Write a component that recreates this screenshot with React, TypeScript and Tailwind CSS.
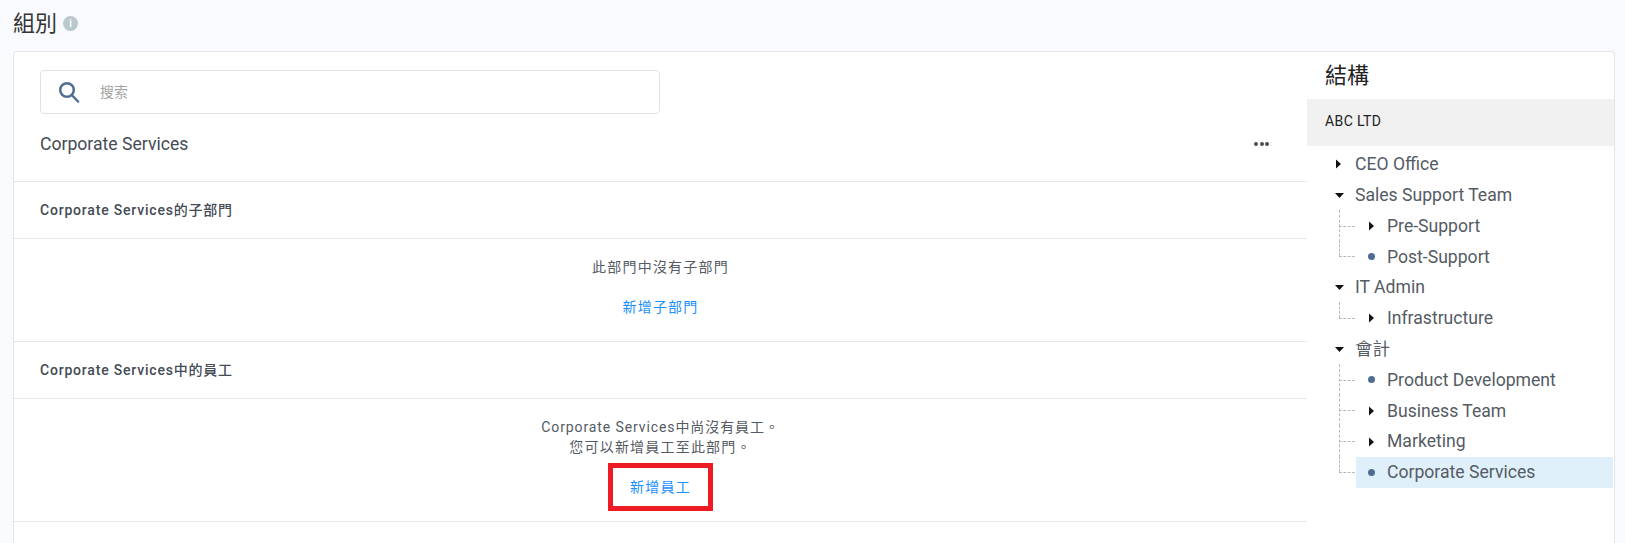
type Kind = "right" | "down" | "dot";

function Marker({ kind }: { kind: Kind }) {
  if (kind === "dot") return <span className="block h-[7px] w-[7px] rounded-full bg-[#4f6d94]" />;
  if (kind === "right")
    return (
      <svg width="5" height="10" viewBox="0 0 5 10" className="ml-[1px] block">
        <path d="M0 0.5 L5 5 L0 9.5 Z" fill="#111" />
      </svg>
    );
  return (
    <svg width="9" height="5" viewBox="0 0 9 5" className="block">
      <path d="M0 0 L9 0 L4.5 5 Z" fill="#111" />
    </svg>
  );
}

function TopRow({ kind, label }: { kind: Kind; label: string }) {
  return (
    <div className="flex h-[30.8px] items-center pl-[28px] text-[#555b63]">
      <span className="flex w-[20px] justify-start">
        <Marker kind={kind} />
      </span>
      <span>{label}</span>
    </div>
  );
}

function ChildRow({ kind, label, active, last }: { kind: Kind; label: string; active?: boolean; last?: boolean }) {
  return (
    <div className="relative ml-[49px] flex h-[30.8px] items-center text-[#555b63]">
      {/* tree connectors */}
      <span className={`absolute left-[-17px] top-[-1px] w-0 border-l border-dashed border-[#b4b9c4] ${last ? "h-[16px]" : "h-[32px]"}`} />
      <span className="absolute left-[-17px] top-[15px] h-0 w-[16px] border-t border-dashed border-[#b4b9c4]" />
      <div className={`mr-[1px] flex h-full flex-1 items-center pl-[12px] ${active ? "bg-[#e0f0fa]" : ""}`}>
        <span className="flex w-[19px] justify-start">
          <Marker kind={kind} />
        </span>
        <span>{label}</span>
      </div>
    </div>
  );
}

function SectionTitle({ children }: { children: React.ReactNode }) {
  return (
    <div className="flex h-[57px] items-center border-b border-[#e8e8e8] pl-[26px] text-[14px] font-medium tracking-[0.8px] text-[#444b54]">
      {children}
    </div>
  );
}

export default function App() {
  return (
    <div className="flex h-[543px] flex-col overflow-hidden bg-[#f9fafe] pl-[13px] pr-[10px] font-['Roboto','Noto_Sans_CJK_TC',sans-serif]">
      <div className="flex h-[51px] shrink-0 items-center gap-[6px] pb-[5px]">
        <h1 className="text-[22px] font-normal text-[#333]">組別</h1>
        <span className="flex h-[15px] w-[15px] items-center justify-center rounded-full bg-[#b9c8cc] text-[10px] font-bold text-white">i</span>
      </div>

      <div className="flex flex-1 rounded-t-[4px] border border-b-0 border-[#e4e5e8] bg-white">
        <div className="w-[1293px] shrink-0">
          <div className="h-[130px] border-b border-[#e8e8e8] pl-[26px] pt-[18px]">
            <div className="flex h-[44px] w-[620px] items-center rounded-[4px] border border-[#dfe1e5] pl-[17px]">
              <svg width="22" height="22" viewBox="0 0 22 22" fill="none" stroke="#4f6d94" strokeWidth="2.5" className="block">
                <circle cx="9" cy="9" r="6.8" />
                <path d="M13.8 14 L20 20.5" strokeLinecap="round" />
              </svg>
              <span className="ml-[20px] text-[14px] text-[#a5a5a5]">搜索</span>
            </div>
            <div className="mt-[10px] flex h-[40px] items-center justify-between pr-[38px]">
              <span className="text-[17.6px] text-[#444b54]">Corporate Services</span>
              <span className="flex gap-[1.5px]">
                <i className="h-[4px] w-[4px] rounded-full bg-[#4a4f57]" />
                <i className="h-[4px] w-[4px] rounded-full bg-[#4a4f57]" />
                <i className="h-[4px] w-[4px] rounded-full bg-[#4a4f57]" />
              </span>
            </div>
          </div>

          <SectionTitle>Corporate Services的子部門</SectionTitle>
          <div className="flex h-[103px] flex-col items-center border-b border-[#e8e8e8] pt-[17px] text-[14px] leading-[22px] tracking-[1.2px]">
            <p className="text-[#555b63]">此部門中沒有子部門</p>
            <a className="mt-[18px] text-[#1890ff]">新增子部門</a>
          </div>

          <SectionTitle>Corporate Services中的員工</SectionTitle>
          <div className="flex h-[123px] flex-col items-center border-b border-[#e8e8e8] pt-[18px] text-[14px] leading-[20px] tracking-[0.9px] text-[#555b63]">
            <p>Corporate Services中尚沒有員工。</p>
            <p className="tracking-[1.2px]">您可以新增員工至此部門。</p>
            <a className="mt-[6px] flex h-[48px] w-[105px] items-center justify-center border-[5px] border-[#ed1c24] tracking-[1.2px] text-[#1890ff]">新增員工</a>
          </div>
        </div>

        <div className="flex-1 text-[17.6px]">
          <h2 className="flex h-[47px] items-center pl-[18px] text-[22px] font-normal text-[#222]">結構</h2>
          <div className="flex h-[47px] items-center bg-[#f1f1f1] pb-[3px] pl-[18px] text-[14px] tracking-[0.4px] text-[#222]">ABC LTD</div>
          <div className="pt-[3px]">
            <TopRow kind="right" label="CEO Office" />
            <TopRow kind="down" label="Sales Support Team" />
            <ChildRow kind="right" label="Pre-Support" />
            <ChildRow kind="dot" label="Post-Support" last />
            <TopRow kind="down" label="IT Admin" />
            <ChildRow kind="right" label="Infrastructure" last />
            <TopRow kind="down" label="會計" />
            <ChildRow kind="dot" label="Product Development" />
            <ChildRow kind="right" label="Business Team" />
            <ChildRow kind="right" label="Marketing" />
            <ChildRow kind="dot" label="Corporate Services" active last />
          </div>
        </div>
      </div>
    </div>
  );
}
